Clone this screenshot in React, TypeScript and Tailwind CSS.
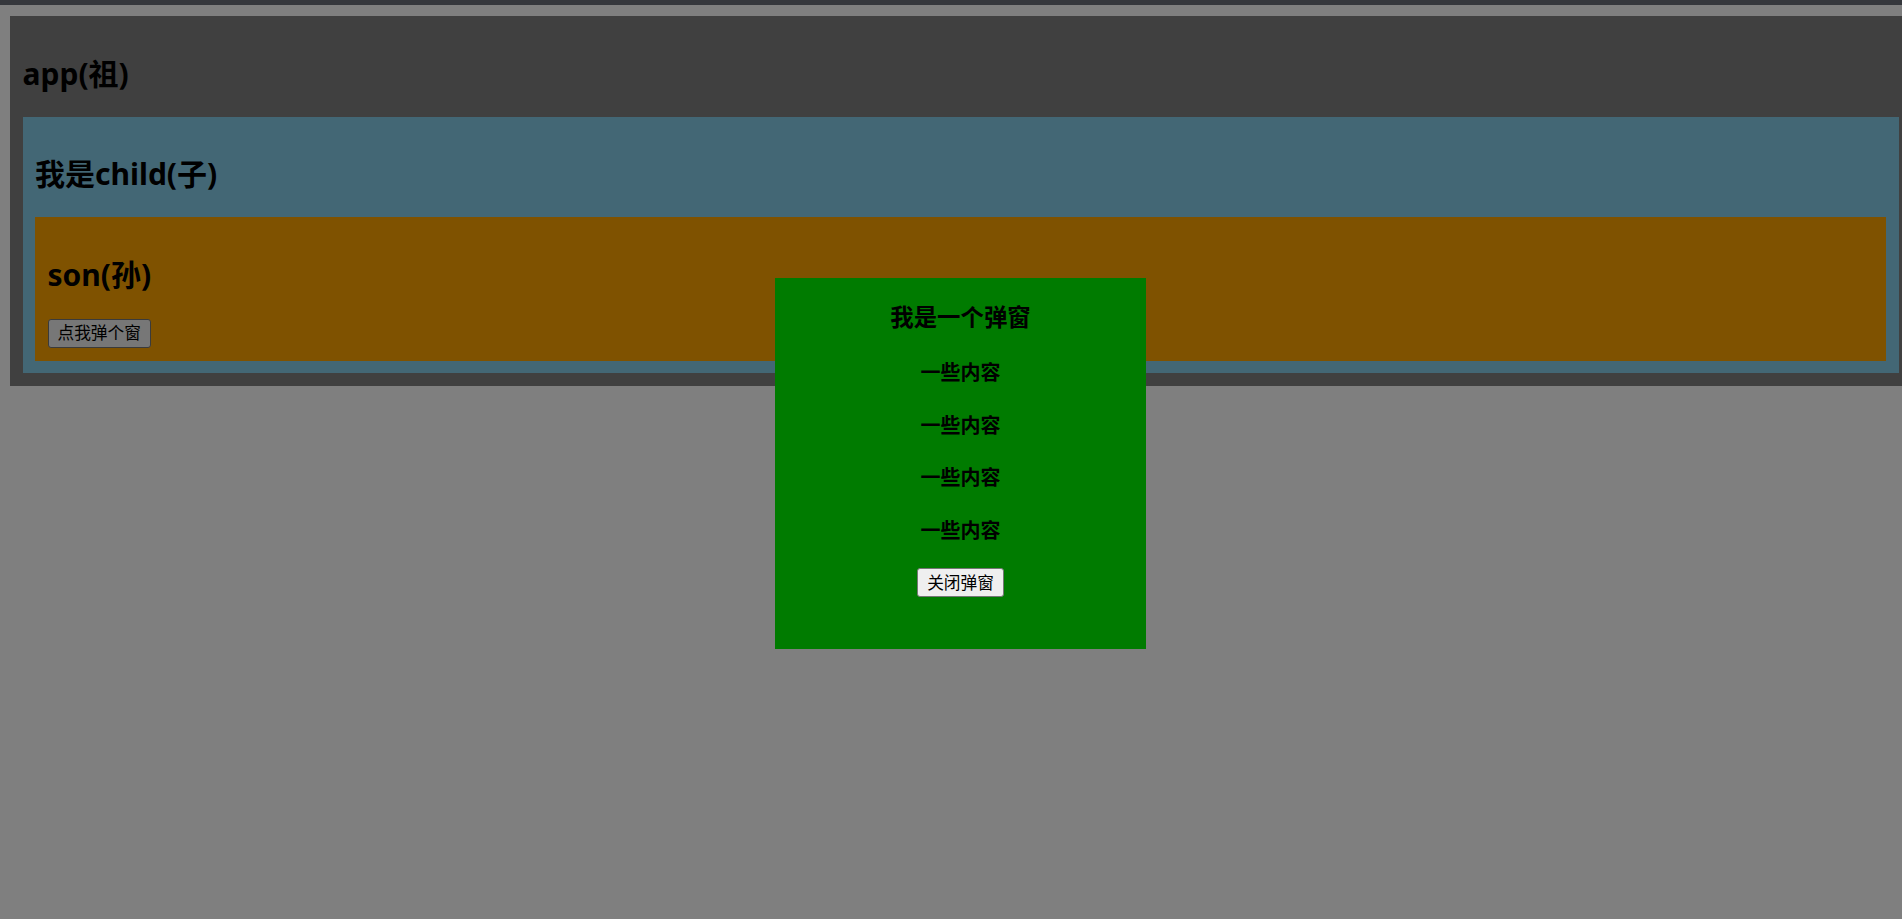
import { useState } from "react";

const FONT = "font-['Noto_Sans','Noto_Sans_CJK_SC',sans-serif]";

function Son({ onOpen }: { onOpen: () => void }) {
  return (
    <div className="bg-[#ffa500] p-[12.5px] pb-[13px]">
      <h2 className="mt-[25px] mb-[25px] text-[30px] leading-[39px] font-bold">
        son(孙)
      </h2>
      <button
        className="h-[29px] rounded-[3px] border border-[#767676] bg-[#efefef] px-[9px] text-[16.7px] leading-[22px] text-black"
        onClick={onOpen}
      >
        点我弹个窗
      </button>
    </div>
  );
}

function Child({ onOpen }: { onOpen: () => void }) {
  return (
    <div className="bg-[#87ceeb] p-[12.5px]">
      <h2 className="mt-[25px] mb-[24px] text-[30px] leading-[39px] font-bold">
        我是child(子)
      </h2>
      <Son onOpen={onOpen} />
    </div>
  );
}

export default function App() {
  const [open, setOpen] = useState<boolean>(true);

  return (
    <div className={`relative min-h-screen overflow-hidden bg-white text-black ${FONT}`}>
      <div className="h-[5px] bg-[#6a6e78]" />
      <div className="pl-[10px] pt-[11px]">
        <div className="w-[1901px] bg-[#808080] p-[12.5px]">
          <h2 className="mt-[25px] mb-[24px] text-[30px] leading-[39px] font-bold">
            app(祖)
          </h2>
          <Child onOpen={() => setOpen(true)} />
        </div>
      </div>

      {open && (
        <>
          <div className="fixed inset-0 bg-black/50" />
          <div className="absolute left-[775px] top-[278px] flex h-[371px] w-[371px] flex-col items-center bg-[#007b00]">
            <h3 className="mt-[24px] text-[23.4px] leading-[31px] font-bold">
              我是一个弹窗
            </h3>
            {[0, 1, 2, 3].map((i) => (
              <h4
                className={
                  i === 0
                    ? "mt-[27px] text-[20px] leading-[26px] font-bold"
                    : "mt-[26.5px] text-[20px] leading-[26px] font-bold"
                }
                key={`content-${i}`}
              >
                一些内容
              </h4>
            ))}
            <button
              className="mt-[24.5px] h-[29px] rounded-[3px] border border-[#767676] bg-[#efefef] px-[9px] text-[16.7px] leading-[22px] text-black"
              onClick={() => setOpen(false)}
            >
              关闭弹窗
            </button>
          </div>
        </>
      )}
    </div>
  );
}
